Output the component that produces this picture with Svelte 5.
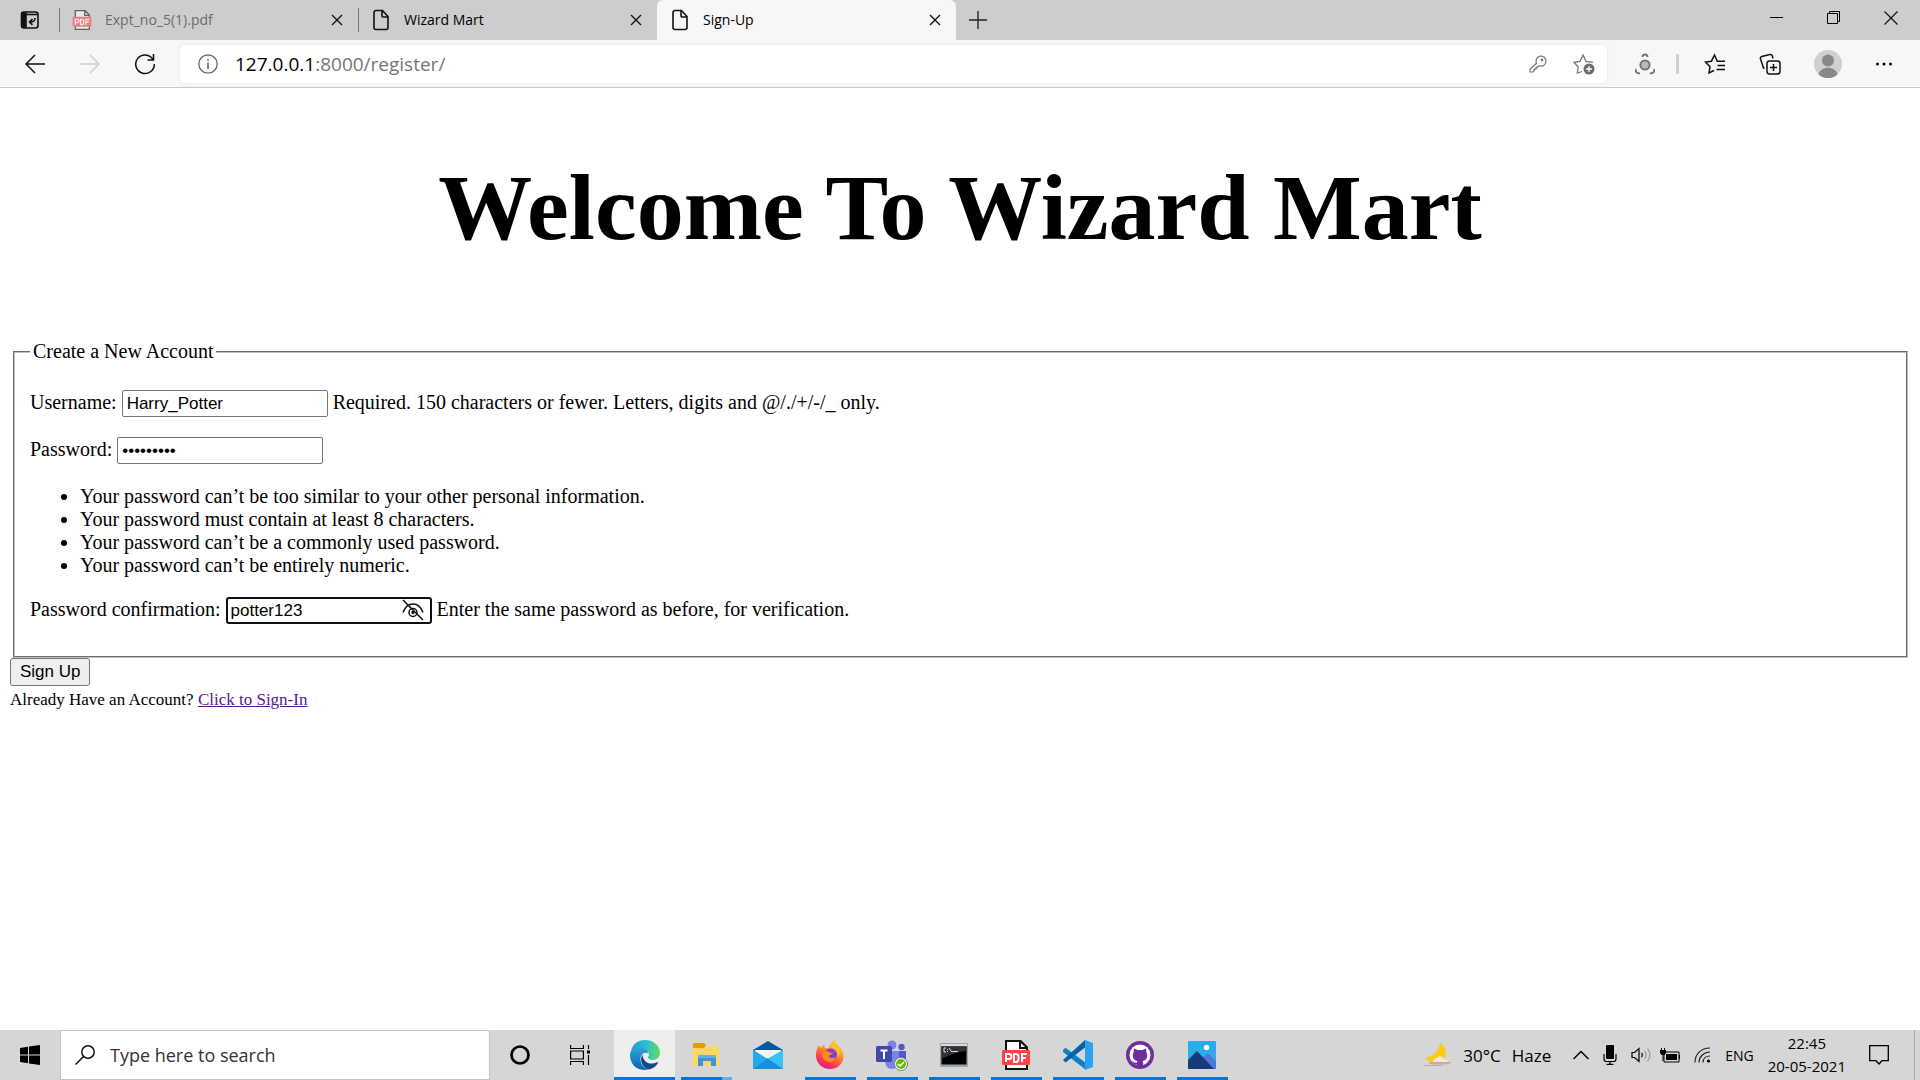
<script lang="ts">
  let username = $state('Harry_Potter');
  let password = $state('potter123');
  let confirmation = $state('potter123');
  let address = $state('');
  let search = $state('');
  const rules = [
    'Your password can’t be too similar to your other personal information.',
    'Your password must contain at least 8 characters.',
    'Your password can’t be a commonly used password.',
    'Your password can’t be entirely numeric.'
  ];
  const tabs = [
    { title: 'Expt_no_5(1).pdf', pdf: true, active: false },
    { title: 'Wizard Mart', pdf: false, active: false },
    { title: 'Sign-Up', pdf: false, active: true }
  ];
</script>

{#snippet pdfIcon()}
  <path d="M5 1h14l7 7v21H5z" fill="#fff" stroke="#111" stroke-width="2" />
  <path d="M18 0h2l7 7v2h-9z" fill="#111" />
  <path d="m20 3 4 4h-4z" fill="#eee" />
  <rect x="1" y="10" width="28" height="15" rx="1" fill="#ff4343" />
  <path d="M5 22v-8h3a2 2 0 0 1 0 5H5M13 14v8h1.500a3 3 0 0 0 3-3v-2a3 3 0 0 0-3-3zM21 22v-8h5M21 18h4" fill="none" stroke="#fff" stroke-width="2" />
{/snippet}

<div class="screen">
  <header class="tabbar">
    <button class="bare tabactions" aria-label="Tab actions">
      <svg width="20" height="20" viewBox="0 0 20 20" fill="none" stroke="#111" stroke-width="1.600">
        <rect x="1.500" y="2" width="16.500" height="16" rx="2.500" />
        <path d="M2 3h4v14H3z" fill="#111" /><path d="M2 4.500h16" />
        <path d="M15 8c0 3-1 4-5 4m2.500-2.800L9.500 12l3 2.800" />
      </svg>
    </button>
    {#each tabs as tab}
      <div class="tab" class:active={tab.active} class:dim={tab.pdf}>
        <button class="bare title">
          {#if tab.pdf}
            <svg class="fade" width="20" height="20" viewBox="0 0 30 30">{@render pdfIcon()}</svg>
          {:else}
            <svg width="20" height="22" viewBox="0 0 20 22" fill="none" stroke="#111" stroke-width="1.600">
              <path d="M5 1.500h6.500l5.500 6v11a2 2 0 0 1-2 2H5a2 2 0 0 1-2-2v-15a2 2 0 0 1 2-2zM11 1.500V7a1 1 0 0 0 1 1h5" />
            </svg>
          {/if}
          <span>{tab.title}</span>
        </button>
        <button class="bare close" aria-label="Close tab">
          <svg width="12" height="12" viewBox="0 0 12 12" stroke="#111" stroke-width="1.400"><path d="m1 1 10 10M11 1 1 11" /></svg>
        </button>
      </div>
    {/each}
    <button class="bare newtab" aria-label="New tab">
      <svg width="18" height="18" viewBox="0 0 18 18" stroke="#222" stroke-width="1.400"><path d="M9 0v18M0 9h18" /></svg>
    </button>
    <div class="window">
      <button class="bare" aria-label="Minimize"><svg width="14" height="14" viewBox="0 0 14 14"><path d="M0 6h13v1H0z" /></svg></button>
      <button class="bare" aria-label="Restore"><svg width="14" height="14" viewBox="0 0 14 14" fill="none" stroke="#000"><path d="M.5 2.500h10v10H.5zM2.500 2.500v-2h10v10h-2" /></svg></button>
      <button class="bare" aria-label="Close"><svg width="14" height="14" viewBox="0 0 14 14" stroke="#111" stroke-width="1.200"><path d="m.5.5 13 13M13.500.5l-13 13" /></svg></button>
    </div>
  </header>

  <nav class="toolbar">
    <button class="bare nav" aria-label="Back">
      <svg width="20" height="20" viewBox="0 0 20 20" fill="none" stroke="#111" stroke-width="1.500"><path d="M20 10H1M10 1l-9 9 9 9" /></svg>
    </button>
    <button class="bare nav" aria-label="Forward" disabled>
      <svg width="20" height="20" viewBox="0 0 20 20" fill="none" stroke="#d0d0d0" stroke-width="1.500"><path d="M0 10h19M10 1l9 9-9 9" /></svg>
    </button>
    <button class="bare nav" aria-label="Refresh">
      <svg width="22" height="22" viewBox="0 0 22 22" fill="none" stroke="#111" stroke-width="1.500"><path d="M19 6.500A9.300 9.300 0 1 0 20.300 11M19.500 1v6h-6" /></svg>
    </button>
    <div class="address">
      <button class="bare info" aria-label="Site information">
        <svg width="20" height="20" viewBox="0 0 20 20" fill="none" stroke="#666" stroke-width="1.300"><circle cx="10" cy="10" r="9.200" /><path d="M10 8.500V15M10 5v1.700" stroke-width="1.500" /></svg>
      </button>
      <label class="url">
        <span class="host">127.0.0.1</span><span>:8000/register/</span>
        <input aria-label="Address" bind:value={address} />
      </label>
      <button class="bare key" aria-label="Saved password">
        <svg width="18" height="18" viewBox="0 0 18 18" fill="none" stroke="#777" stroke-width="1.200"><path d="M7.500 8.300a5 5 0 1 1 2.700 2.500L8.500 12.300H7v2H5V16l-1 1H1v-2.700z" /><circle cx="13" cy="5" r=".8" fill="#777" /></svg>
      </button>
      <button class="bare" aria-label="Add to favorites">
        <svg width="22" height="22" viewBox="0 0 22 22" fill="none" stroke="#777" stroke-width="1.300"><path d="M9 18.500 4.300 20l.9-6L1 9.300l6-1L10 2l3 6.300 7 1" /><circle cx="16" cy="16" r="5.500" fill="#6b6b6b" stroke="none" /><path d="M16 13v6M13 16h6" stroke="#fff" /></svg>
      </button>
    </div>
    <div class="tools">
      <button class="bare" aria-label="Extension">
        <svg width="20" height="22" viewBox="0 0 20 22" fill="none" stroke="#777" stroke-width="2"><circle cx="10" cy="12" r="4.600" fill="#bbb" /><path d="M7.500 4a2.500 2.500 0 0 1 5 0M1 16a3 3 0 0 0 4 4M19 16a3 3 0 0 1-4 4" /></svg>
      </button>
      <span class="divider"></span>
      <button class="bare" aria-label="Favorites">
        <svg width="22" height="22" viewBox="0 0 22 22" fill="none" stroke="#111" stroke-width="1.500"><path d="M10 17.500 5 20l1-6.300L1.500 9l6-.8L10.500 2l2.800 6.200H21M13.500 12.500H21M12.500 16.500H21" /></svg>
      </button>
      <button class="bare" aria-label="Collections">
        <svg width="22" height="22" viewBox="0 0 22 22" fill="none" stroke="#111" stroke-width="1.500"><rect x="8" y="8" width="13" height="13" rx="2.500" /><path d="M14.500 11v7M11 14.500h7M5.500 15.500 4.500 15l-3-9a2 2 0 0 1 1.300-2.500l8-2a2 2 0 0 1 2.400 1.300l.8 2.700" /></svg>
      </button>
      <button class="bare" aria-label="Profile">
        <svg width="28" height="28" viewBox="0 0 28 28"><circle cx="14" cy="14" r="14" fill="#d2d0ce" /><circle cx="14" cy="10.500" r="6" fill="#8a8886" /><path d="M4.500 24.500c2-9 17-9 19 0a14 14 0 0 1-19 0z" fill="#8a8886" /></svg>
      </button>
      <button class="bare" aria-label="Settings and more">
        <svg width="18" height="6" viewBox="0 0 18 6"><circle cx="2.500" cy="3" r="1.500" /><circle cx="9" cy="3" r="1.500" /><circle cx="15.500" cy="3" r="1.500" /></svg>
      </button>
    </div>
  </nav>

  <main>
    <h1>Welcome To Wizard Mart</h1>
    <form onsubmit={(e) => e.preventDefault()}>
      <fieldset>
        <legend>Create a New Account</legend>
        <div class="row">
          <label for="username">Username:</label>
          <input id="username" class="field" type="text" bind:value={username} />
          <span>Required. 150 characters or fewer. Letters, digits and @/./+/-/_ only.</span>
        </div>
        <div class="row">
          <label for="password">Password:</label>
          <input id="password" class="field" type="password" bind:value={password} />
        </div>
        <ul>
          {#each rules as rule}<li>{rule}</li>{/each}
        </ul>
        <div class="row">
          <label for="confirm">Password confirmation:</label>
          <span class="reveal">
            <input id="confirm" class="field focused" type="text" bind:value={confirmation} />
            <button type="button" class="bare eye" aria-label="Hide password">
              <svg width="22" height="22" viewBox="0 0 22 22" fill="none" stroke="#111" stroke-width="1.500"><path d="M1 13.500C3 8 7 5 11 5s8 3 10 8.500M1 1l20 20" /><circle cx="11" cy="13.500" r="4" /><circle cx="11" cy="13.500" r="1" /></svg>
            </button>
          </span>
          <span>Enter the same password as before, for verification.</span>
        </div>
      </fieldset>
      <button class="submit" type="submit">Sign Up</button>
    </form>
    <p class="signin">Already Have an Account? <a href="#signin">Click to Sign-In</a></p>
  </main>

  <footer class="taskbar">
    <button class="bare start" aria-label="Start">
      <svg width="20" height="20" viewBox="0 0 20 20"><path d="M0 3l8-1.200v7.700H0zM9 1.600 20 0v9.500H9zM0 10.500h8v7.700L0 17zM9 10.500h11V20L9 18.400z" /></svg>
    </button>
    <label class="search">
      <svg width="20" height="20" viewBox="0 0 20 20" fill="none" stroke="#111" stroke-width="1.500"><circle cx="13" cy="7" r="6.200" /><path d="M8.500 11.500.5 19.500" /></svg>
      <input aria-label="Search" placeholder="Type here to search" bind:value={search} />
    </label>
    <button class="bare cortana" aria-label="Cortana">
      <svg width="20" height="20" viewBox="0 0 20 20"><circle cx="10" cy="10" r="8.500" fill="none" stroke="#000" stroke-width="2.700" /></svg>
    </button>
    <button class="bare cortana" aria-label="Task view">
      <svg width="21" height="20" viewBox="0 0 21 20" fill="none" stroke="#000" stroke-width="1.200"><path d="M.6 0v3.500h12.800V0M.6 20v-3.500h12.800V20M.6 6h12.800v8H.6zM18.500 0v4M18.500 10v10" /><path d="M17 5.500h3v3h-3z" fill="#000" stroke="none" /></svg>
    </button>
    <div class="apps">
      <button class="bare app current" aria-label="Microsoft Edge">
        <svg width="30" height="30" viewBox="0 0 30 30">
          <defs>
            <linearGradient id="edgeTop" x1="0" x2="1"><stop offset="0" stop-color="#1a9bd7" /><stop offset=".55" stop-color="#2cc3c8" /><stop offset="1" stop-color="#63dc55" /></linearGradient>
            <linearGradient id="edgeLeft" x1="0" y1="0" x2="0" y2="1"><stop offset="0" stop-color="#2aa6dc" /><stop offset="1" stop-color="#0f5fb0" /></linearGradient>
          </defs>
          <path d="M1 12C2 4 8 0 15 0c9 0 15 6 15 13 0 4-3 7-7 7-3 0-5-1-5-2.500 0-1 1-1.500 1-3.500 0-3-4-5-8-5-4.500 0-8 1.500-10 3z" fill="url(#edgeTop)" />
          <path d="M0 15c0-5 4-7.500 9-7.500 5 0 9 2.500 9.500 6C14 11 10 15 10.500 20c.5 5 3.500 8.500 8 9.300C8 32 0 25 0 15z" fill="url(#edgeLeft)" />
          <path d="M12.500 14.500C9 20 12 28 19 29.500c4-1 7-3 9-6.500.4-.7-.2-1-.8-.7-7 3-14 .7-14.700-7.800z" fill="#114a8b" />
        </svg>
      </button>
      <button class="bare app open stacked" aria-label="File Explorer">
        <svg width="28" height="28" viewBox="0 0 28 28"><path d="M1 2h10l3 4h13v19H1z" fill="#ffca4f" /><path d="M1 2h11l2 2-2 3H1z" fill="#e19c05" /><path d="M1 7h11l3-2h12v20H1z" fill="#ffd568" /><path d="M6 25V16a2 2 0 0 1 2-2h14a2 2 0 0 1 2 2v9h-5v-5h-8v5z" fill="#3d94d8" /><path d="M6 16a2 2 0 0 1 2-2h14a2 2 0 0 1 2 2v1H6z" fill="#5fb0e8" /></svg>
      </button>
      <button class="bare app" aria-label="Mail">
        <svg width="30" height="30" viewBox="0 0 30 30"><path d="M0 10 15 1l15 9v5H0z" fill="#0458a2" /><path d="M2 10h26v12H2z" fill="#f3f3f3" /><path d="M0 10v19h30V10L15 19z" fill="#28a8ea" /><path d="M0 29h30L15 18z" fill="#1490df" /><path d="M30 10v19L15 18.500z" fill="#39c4f3" /></svg>
      </button>
      <button class="bare app open" aria-label="Firefox">
        <svg width="30" height="30" viewBox="0 0 30 30">
          <defs><linearGradient id="fox" x1=".8" y1="0" x2=".3" y2="1"><stop offset="0" stop-color="#ffe34a" /><stop offset=".45" stop-color="#ff8a1e" /><stop offset=".75" stop-color="#ff394f" /><stop offset="1" stop-color="#e3158b" /></linearGradient></defs>
          <path d="M19 0c1 4 9 7 9.500 15.500C29 23 23 29 15 29S1 23 1 15.500C1 11 2 8 4 5l1.500 3L9 4.500 10 8h4c1-4 3-6 5-8z" fill="url(#fox)" />
          <circle cx="15.500" cy="15" r="6.500" fill="#7a40d8" /><path d="M8 12c3-1.500 5-1 6.500.5L18 13c-1 2-4 1.500-4 3.500 1 2 5 2 7 0-1 5-6 7-10 4.500S7 15 8 12z" fill="#ff8a1e" /><path d="M16 8c5-1 8 4 6 10 4-4 4-10-1-14-1-2-1-3-2-4-2 2-3 5-3 8z" fill="#ffc132" />
        </svg>
      </button>
      <button class="bare app open" aria-label="Microsoft Teams">
        <svg width="32" height="32" viewBox="0 0 32 32"><circle cx="16" cy="6" r="4.500" fill="#7b83eb" /><circle cx="25.500" cy="8" r="3.200" fill="#5059c9" /><path d="M19 12h11v9a5 5 0 0 1-9 3z" fill="#5059c9" /><path d="M9 12h14v10c0 5-3 8-7 8s-7-3-7-8z" fill="#7b83eb" /><rect y="7" width="16" height="16" rx="1.500" fill="#4048a8" /><path d="M4.500 11.500h7M8 11.500V20" stroke="#fff" stroke-width="2" /><circle cx="25" cy="25" r="6.500" fill="#fff" stroke="#777" /><circle cx="25" cy="25" r="5" fill="#6bb700" /><path d="m22 25 2 2 4-4" fill="none" stroke="#fff" stroke-width="1.500" /></svg>
      </button>
      <button class="bare app open" aria-label="Command Prompt">
        <svg width="28" height="24" viewBox="0 0 28 24"><rect width="28" height="24" rx="1" fill="#9ba4ac" /><path d="M1 1h26v2H1z" fill="#d5dbe0" /><path d="M1.500 3.500h25v18h-25z" /><path d="M1.500 3.500h25V8C17 9 9 12 1.500 16z" fill="#333" /><path d="M6 5H4v4h2M7.500 6v1M7.500 8v1M9 5l3 4M12 8.500h6" fill="none" stroke="#ddd" /></svg>
      </button>
      <button class="bare app open" aria-label="PDF reader"><svg width="30" height="30" viewBox="0 0 30 30">{@render pdfIcon()}</svg></button>
      <button class="bare app open" aria-label="Visual Studio Code">
        <svg width="30" height="30" viewBox="0 0 30 30"><path d="m0 10 2.500-2.200L23 23v7L0 12z" fill="#0f7fc8" /><path d="M0 20 22 0v7.500L2.500 22.500 0 20z" fill="#0065a9" /><path d="m22 0 8 3v24l-8 3z" fill="#29a3f0" /></svg>
      </button>
      <button class="bare app open" aria-label="GitHub Desktop">
        <svg width="28" height="28" viewBox="0 0 28 28"><circle cx="14" cy="14" r="14" fill="#6e2f9c" /><circle cx="14" cy="14" r="10.500" fill="#fff" /><path d="M8 7.500 11.500 9h5L20 7.500l.5 4c2 4 0 8-4 8.500l.7 1.500V26h-6.400v-2.500c-3 .5-3.500-1.500-5-3 2-.5 2.500 2 5 1.200L11.500 20c-4-.5-6-4.500-4-8.500z" fill="#6e2f9c" /></svg>
      </button>
      <button class="bare app open" aria-label="Photos">
        <svg width="28" height="28" viewBox="0 0 28 28"><rect width="28" height="28" rx="1" fill="#27aeea" /><path d="m13 18 7-6 8 8v8H13z" fill="#4a78d8" /><path d="M28 8v12l-8-8z" fill="#4d9de8" opacity=".6" /><path d="M0 19 9 10l17 18H0z" fill="#173a7a" /><circle cx="18.500" cy="6.500" r="2.700" fill="#fff" /></svg>
      </button>
    </div>
    <div class="tray">
      <button class="bare weather">
        <svg width="28" height="24" viewBox="0 0 28 24"><path d="M16 0c-1 7-5 13-15 15 4 5 13 6 18 2 5-5 3-13-3-17z" fill="#ffc90e" /><path d="M9 20a4 4 0 0 1 4-5c2-3 6-2 7 1 3 0 4 1 4 3z" fill="#f5e6da" /><path d="M5 19.500h22l-5 1.500H8zM0 22.500h18" fill="#d5b49c" stroke="#c9a994" /></svg>
        <span>30°C</span><span>Haze</span>
      </button>
      <button class="bare" aria-label="Show hidden icons"><svg width="16" height="10" viewBox="0 0 16 10" fill="none" stroke="#000" stroke-width="1.500"><path d="m.5 9 7.500-7.500L15.500 9" /></svg></button>
      <button class="bare" aria-label="Microphone"><svg width="14" height="20" viewBox="0 0 14 20"><rect x="3" width="8" height="14" rx="1" /><path d="M1 9v5c0 1.500 1 2.500 2.500 2.500h7c1.500 0 2.500-1 2.500-2.500V9M7 16.500V19M3.500 19.300h7" fill="none" stroke="#000" stroke-width="1.200" /></svg></button>
      <button class="bare" aria-label="Volume"><svg width="20" height="16" viewBox="0 0 20 16" fill="none" stroke="#000" stroke-width="1.200"><path d="M1 5.500h2.500L8 1.500v13l-4.500-4H1zM10.500 6c1 1 1 3 0 4" /><path d="M13.500 4c2 2 2 6 0 8M16.500 1.500c3 4 3 9 0 13" stroke="#999" /></svg></button>
      <button class="bare battery" aria-label="Battery"><svg width="20" height="15" viewBox="0 0 20 15"><path d="M4 4h15v10H4z" fill="none" stroke="#000" /><path d="M6 6h11v6H6zM19 7h1v4h-1zM0 2h6v3L4.500 7h-3L0 5zM1 0h1v3H1zM4 0h1v3H4zM2.500 6h1v7h-1z" /></svg></button>
      <button class="bare" aria-label="Network"><svg width="17" height="16" viewBox="0 0 17 16" fill="none" stroke="#222" stroke-width="1.200"><path d="M1 15.500C1 7 7 1 16 1M5 15.500c0-6 5-10.500 11-10.500M9 15.500c0-4 3-6.500 7-6.500" /><circle cx="14.500" cy="14" r="1.600" fill="#000" stroke="none" /></svg></button>
      <button class="bare lang">ENG</button>
      <button class="bare clock"><span>22:45</span><span>20-05-2021</span></button>
      <button class="bare notes" aria-label="Notifications"><svg width="20" height="20" viewBox="0 0 20 20" fill="none" stroke="#000" stroke-width="1.300"><path d="M.7.7h18.600v15H13l-3 3.300-3-3.300H.7z" /></svg></button>
    </div>
  </footer>
</div>

<style>
  :global(body) { background: #fff; color: #000; }
  .screen {
    display: grid;
    grid-template-rows: auto auto 1fr auto;
    min-height: 100vh;
    font-family: "Liberation Serif", serif;
    font-size: 20px;
    line-height: 23px;
  }
  .bare {
    display: flex;
    align-items: center;
    justify-content: center;
    padding: 0;
    border: 0;
    background: none;
    color: inherit;
    font: inherit;
  }
  svg { display: block; flex: none; }

  .tabbar, .toolbar, .taskbar { font-family: "Open Sans", "Noto Sans", sans-serif; }
  .tabbar { display: flex; height: 40px; background: #cdcdcd; font-size: 14px; line-height: 20px; }
  .tabactions { width: 59px; }
  .tab {
    display: flex;
    align-items: center;
    box-sizing: border-box;
    width: 299px;
    padding: 0 15px 0 13px;
    background: linear-gradient(#777, #777) left center / 1px 24px no-repeat;
  }
  .tab.active { background: #f7f7f7; border-radius: 6px 6px 0 0; }
  .title { flex: 1; justify-content: flex-start; gap: 13px; height: 100%; }
  .dim { color: #6b6b6b; }
  .fade { opacity: .55; }
  .newtab { width: 43px; }
  .window { display: flex; gap: 43px; margin-left: auto; padding: 0 22px 4px 0; }

  .toolbar {
    display: flex;
    align-items: center;
    box-sizing: border-box;
    height: 48px;
    padding: 0 27px 0 7px;
    background: #f7f7f7;
    border-bottom: 1px solid #c8c8c8;
  }
  .nav { width: 55px; height: 40px; }
  .address {
    display: flex;
    align-items: center;
    flex: 1;
    gap: 26px;
    height: 38px;
    margin-left: 8px;
    padding: 0 12px 0 18px;
    background: #fff;
    border-radius: 5px;
    box-shadow: 0 0 3px #e4e4e4;
  }
  .url { display: flex; flex: 1; margin-left: -9px; color: #757575; font-size: 19px; line-height: 26px; }
  .host { color: #000; }
  .url input { flex: 1; min-width: 0; padding: 0; border: 0; outline: 0; background: none; font: inherit; }
  .tools { display: flex; align-items: center; gap: 33px; margin-left: 28px; }
  .divider { width: 3px; height: 20px; margin: 0 -8px 0 -12px; background: #d0d0d0; }

  main { padding: 0 10px; }
  h1 { margin: 64px 0 78px; font-size: 94px; line-height: 110px; text-align: center; }
  fieldset { margin: 0 2px 0 3px; padding: 7px 15px 12px; border: 2px groove #c0c0c0; min-width: 0; }
  legend { padding: 0 3px; }
  .row { display: flex; flex-wrap: wrap; align-items: baseline; gap: 5px; margin: 20px 0; }
  .field {
    box-sizing: border-box;
    width: 206px;
    height: 27px;
    padding: 1px 4px;
    border: 1px solid #767676;
    border-radius: 2px;
    background: #fff;
    font: 17px "Liberation Sans", sans-serif;
  }
  .focused { border: 2px solid #101010; border-radius: 3px; padding: 0 3px; outline: 0; }
  .reveal { position: relative; }
  .eye { position: absolute; top: 2px; right: 8px; }
  ul { margin: 21px 0 20px; padding-left: 50px; }
  .submit {
    display: block;
    height: 28px;
    padding: 0 9px;
    border: 1px solid #767676;
    border-radius: 3px;
    background: #efefef;
    color: #000;
    font: 17px "Liberation Sans", sans-serif;
  }
  .signin { margin: 4px 0; font-size: 17px; line-height: 20px; }
  .signin a { color: #551a8b; }

  .taskbar { display: flex; height: 50px; background: #d6d6d6; }
  .start { width: 60px; }
  .search {
    display: flex;
    align-items: center;
    box-sizing: border-box;
    width: 430px;
    gap: 15px;
    padding: 0 14px;
    background: #fff;
    border: 1px solid #c4c4c4;
  }
  .search input { flex: 1; min-width: 0; padding: 0; border: 0; outline: 0; background: none; font: 18px "Open Sans", sans-serif; }
  .search input::placeholder { color: #333; opacity: 1; }
  .cortana { width: 60px; }
  .apps { display: flex; margin-left: 4px; }
  .app { position: relative; width: 62px; padding-right: 2px; }
  .current { width: 61px; margin-right: 1px; padding: 3px 0 0; background: #eee; border-bottom: 3px solid #0078d7; }
  .open::after { content: ""; position: absolute; inset: auto 6px 0 5px; height: 3px; background: #0078d7; }
  .stacked::after { background: linear-gradient(90deg, #0078d7 80%, #66aee8 80%); }
  .tray { display: flex; align-items: center; gap: 14px; margin-left: auto; padding-right: 5px; }
  .weather { gap: 11px; margin-right: 8px; font-size: 17px; }
  .battery { margin-left: -5px; }
  .lang { font-size: 14px; }
  .clock { flex-direction: column; font-size: 15px; line-height: 23px; }
  .notes { box-sizing: border-box; height: 50px; padding: 0 25px 0 9px; border-right: 1px solid #aaa; }
</style>
